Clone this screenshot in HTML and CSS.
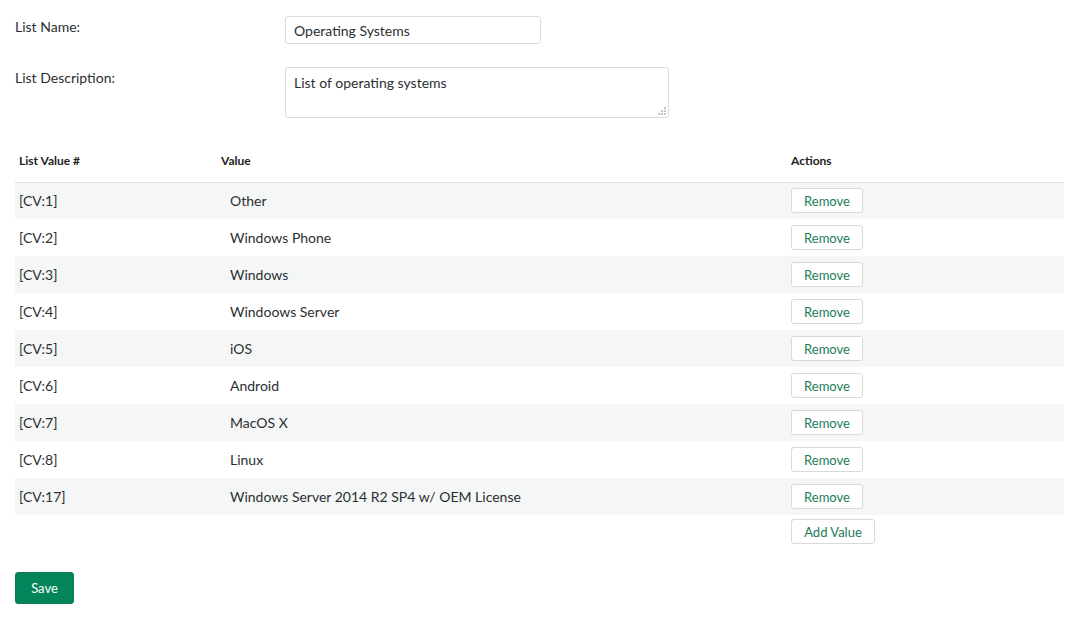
FILE: index.html
```html
<!DOCTYPE html>
<html>
<head>
<meta charset="utf-8">
<link rel="stylesheet" href="styles.css">
</head>
<body>
<div class="page">
  <div class="form-row">
    <label class="form-label">List Name:</label>
    <input class="text-input" type="text" value="Operating Systems">
  </div>
  <div class="form-row">
    <label class="form-label">List Description:</label>
    <div class="area-wrap">
      <textarea class="text-area">List of operating systems</textarea>
      <svg class="grip" width="9" height="9" viewBox="0 0 9 9">
        <rect x="0" y="6" width="2" height="2" fill="#c4c4c4"/>
        <rect x="3" y="3" width="2" height="2" fill="#c4c4c4"/>
        <rect x="3" y="6" width="2" height="2" fill="#c4c4c4"/>
        <rect x="6" y="0" width="2" height="2" fill="#c4c4c4"/>
        <rect x="6" y="3" width="2" height="2" fill="#c4c4c4"/>
        <rect x="6" y="6" width="2" height="2" fill="#c4c4c4"/>
      </svg>
    </div>
  </div>

  <table class="values">
    <colgroup>
      <col class="c-id"><col class="c-value"><col class="c-actions">
    </colgroup>
    <thead>
      <tr><th>List Value #</th><th>Value</th><th>Actions</th></tr>
    </thead>
    <tbody>
      <tr><td>[CV:1]</td><td class="val">Other</td><td><button class="btn">Remove</button></td></tr>
      <tr><td>[CV:2]</td><td class="val">Windows Phone</td><td><button class="btn">Remove</button></td></tr>
      <tr><td>[CV:3]</td><td class="val">Windows</td><td><button class="btn">Remove</button></td></tr>
      <tr><td>[CV:4]</td><td class="val">Windoows Server</td><td><button class="btn">Remove</button></td></tr>
      <tr><td>[CV:5]</td><td class="val">iOS</td><td><button class="btn">Remove</button></td></tr>
      <tr><td>[CV:6]</td><td class="val">Android</td><td><button class="btn">Remove</button></td></tr>
      <tr><td>[CV:7]</td><td class="val">MacOS X</td><td><button class="btn">Remove</button></td></tr>
      <tr><td>[CV:8]</td><td class="val">Linux</td><td><button class="btn">Remove</button></td></tr>
      <tr><td>[CV:17]</td><td class="val">Windows Server 2014 R2 SP4 w/ OEM License</td><td><button class="btn">Remove</button></td></tr>
    </tbody>
    <tfoot>
      <tr><td></td><td></td><td class="add-cell"><button class="btn btn-add">Add Value</button></td></tr>
    </tfoot>
  </table>

  <button class="btn-save">Save</button>
</div>
</body>
</html>
```

FILE: styles.css
```css
* { box-sizing: border-box; }
html, body { margin: 0; padding: 0; background: #fff; }
body {
  font-family: Lato, "Liberation Sans", sans-serif;
  color: #333;
  font-size: 13px;
}
.page {
  padding: 16px 15px 20px 15px;
}
.form-row {
  display: flex;
  align-items: flex-start;
  margin-bottom: 23px;
}
.form-label {
  width: 270px;
  flex: none;
  font-size: 14px;
  line-height: 18px;
  padding-top: 2px;
  color: #2b2f33;
}
.text-input {
  width: 256px;
  height: 28px;
  border: 1px solid #dcdcdc;
  border-radius: 3px;
  padding: 0 8px;
  font-family: inherit;
  font-size: 14px;
  color: #2b2f33;
  outline: none;
}
.area-wrap {
  position: relative;
  width: 384px;
  height: 51px;
}
.text-area {
  display: block;
  width: 384px;
  height: 51px;
  border: 1px solid #dcdcdc;
  border-radius: 3px;
  padding: 6px 8px;
  font-family: inherit;
  font-size: 14px;
  line-height: 18px;
  color: #2b2f33;
  outline: none;
  resize: none;
}
.grip {
  position: absolute;
  right: 2px;
  bottom: 2px;
}
.values {
  width: 100%;
  border-collapse: collapse;
  table-layout: fixed;
}
.c-id { width: 202px; }
.c-value { width: 570px; }
.values th {
  text-align: left;
  font-weight: bold;
  font-size: 12px;
  color: #222;
  height: 41px;
  padding: 0 4px 2px 4px;
  vertical-align: middle;
  border-bottom: 1px solid #e1e1e1;
}
.values tbody td {
  height: 37px;
  padding: 0 4px;
  font-size: 14px;
  vertical-align: middle;
  color: #2b2f33;
}
.values tbody td.val { padding-left: 13px; }
.values tbody tr:nth-child(odd) td { background: #f4f7f5; }
.btn {
  height: 25px;
  padding: 0 12px;
  border: 1px solid #d9d9d9;
  border-radius: 3px;
  background: #fff;
  color: #1b7d57;
  font-family: inherit;
  font-size: 13px;
  line-height: 24px;
  display: block;
  cursor: pointer;
}
.values tbody .btn { width: 72px; padding: 0; }
.btn-add { width: 84px; padding: 0; }
.values tfoot td {
  padding: 4px 4px 0 4px;
  height: 29px;
  vertical-align: top;
}
.btn-save {
  display: block;
  margin-top: 28px;
  width: 59px;
  height: 32px;
  background: #03855b;
  border: 1px solid #0a7a55;
  border-radius: 3px;
  color: #fff;
  font-family: inherit;
  font-size: 13px;
  cursor: pointer;
}
```
